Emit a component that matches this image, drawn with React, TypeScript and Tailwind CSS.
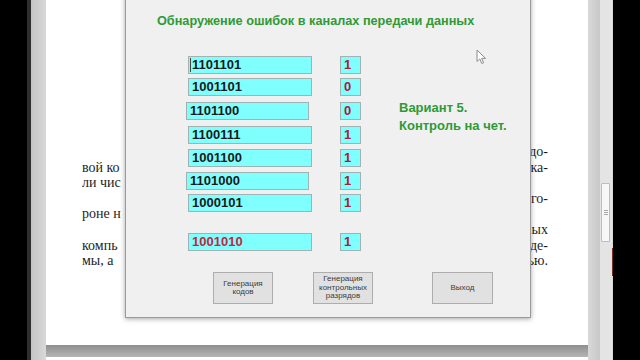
import React from "react";

const rows: { code: string; bit: string; shift?: boolean; red?: boolean; mt: string; caret?: boolean }[] = [
  { code: "1101101", bit: "1", mt: "mt-0", caret: true },
  { code: "1001101", bit: "0", mt: "mt-[4px]" },
  { code: "1101100", bit: "0", mt: "mt-[6px]", shift: true },
  { code: "1100111", bit: "1", mt: "mt-[6px]" },
  { code: "1001100", bit: "1", mt: "mt-[5px]" },
  { code: "1101000", bit: "1", mt: "mt-[5px]", shift: true },
  { code: "1000101", bit: "1", mt: "mt-[4px]" },
  { code: "1001010", bit: "1", mt: "mt-[21px]", red: true },
];

const docLines: { left: string; right: string }[] = [
  { left: "", right: "до-" },
  { left: "вой ко", right: "ка-" },
  { left: "ли чис", right: "" },
  { left: "", right: "го-" },
  { left: "роне н", right: "" },
  { left: "", right: "ых" },
  { left: "компь", right: "де-" },
  { left: "мы, а", right: "ью." },
];

function Cursor() {
  return (
    <svg className="absolute left-[476px] top-[49px]" width="12" height="16" viewBox="0 0 12 16">
      <path
        d="M1 1 L1 12.5 L3.8 10 L5.8 14.5 L7.6 13.7 L5.7 9.4 L9.5 9.4 Z"
        fill="#ffffff"
        stroke="#8c8c8c"
        strokeWidth="1"
        strokeLinejoin="round"
      />
    </svg>
  );
}

export default function App() {
  return (
    <div className="relative flex h-[360px] w-[640px] overflow-hidden bg-black" style={{ fontFamily: '"Liberation Sans", Arial, sans-serif' }}>
      <div className="w-[27px] shrink-0 bg-black" />
      <div className="w-[4px] shrink-0 bg-[#2e2e2e]" />
      <div className="w-[15px] shrink-0 bg-gradient-to-r from-[#c4c4c4] to-[#d9d9d9]" />
      <div className="flex w-[542px] shrink-0 flex-col">
        <div className="h-[345px] bg-white pl-[36px] pr-[40px] pt-[144px] text-[14px] leading-[15.6px] text-[#1e1e1e]" style={{ fontFamily: '"Liberation Serif", "Times New Roman", serif' }}>
          {docLines.map((l, i) => (
            <div key={i} className="flex h-[15.6px] justify-between whitespace-nowrap">
              <span className="w-[44px] overflow-hidden">{l.left}</span>
              <span>{l.right}</span>
            </div>
          ))}
        </div>
        <div className="h-[12px] bg-gradient-to-b from-[#8f8f8f] to-[#b5b5b5]" />
        <div className="flex-1 bg-white" />
      </div>
      <div className="w-[12px] shrink-0 bg-gradient-to-r from-[#d8d8d8] to-[#c8c8c8]" />
      <div className="relative w-[12px] shrink-0 bg-[#e4e4e4]">
        <div className="absolute left-[1px] top-[183px] flex h-[59px] w-[9px] flex-col items-center justify-center gap-[1px] rounded-[1px] border border-[#bdbdbd] bg-[#f7f7f7]">
          <div className="h-[1px] w-[4px] bg-[#a8a8a8]" />
          <div className="h-[1px] w-[4px] bg-[#a8a8a8]" />
          <div className="h-[1px] w-[4px] bg-[#a8a8a8]" />
        </div>
      </div>
      <div className="relative w-[1px] shrink-0 bg-[#d9d9d9]">
        <div className="absolute left-0 top-[248px] h-[28px] w-[1px] bg-[#7a2a20]" />
      </div>
      <div className="flex-1 bg-black" />

      {/* Dialog window */}
      <div className="absolute left-[125px] top-[-4px] flex h-[322px] w-[406px] flex-col border border-[#9a9a9a] bg-[#f0f0f0] shadow-[0_1px_5px_rgba(0,0,0,0.35)]">
        <div className="mt-[16px] pl-[31px] text-[12.7px] font-bold leading-[16px] text-[#2f9a36]">
          Обнаружение ошибок в каналах передачи данных
        </div>
        <div className="mt-[27px] flex pl-[60px]">
          <div className="flex flex-col">
            {rows.map((r, i) => (
              <div key={i} className={`flex h-[18px] w-[175px] justify-between ${r.mt}`}>
                <div
                  className={`flex h-[18px] items-center border border-[#9fb3b3] bg-[#80ffff] text-[13px] font-bold ${r.caret ? "pl-[1px]" : "pl-[3px]"} ${r.shift ? "ml-0 w-[123px]" : "ml-[2px] w-[124px]"} ${r.red ? "text-[#c0283f]" : "text-[#1a1a1a]"}`}
                >
                  {r.caret && <span className="mr-[1px] h-[14px] w-[1px] bg-[#444]" />}
                  {r.code}
                </div>
                <div className="flex h-[18px] w-[21px] items-center border border-[#9fb3b3] bg-[#80ffff] pl-[3px] text-[13px] font-bold text-[#a8203a]">
                  {r.bit}
                </div>
              </div>
            ))}
          </div>
          <div className="ml-[38px] mt-[43px] text-[13px] font-bold leading-[18px] text-[#2f9a36]">
            <div>Вариант 5.</div>
            <div>Контроль на чет.</div>
          </div>
        </div>
        <div className="mt-[21px] flex pl-[87px] text-[8px] leading-[8.5px] text-[#3c3c3c]">
          <div className="flex h-[32px] w-[60px] items-center justify-center border border-[#adadad] bg-[#e1e1e1] text-center">
            Генерация<br />кодов
          </div>
          <div className="ml-[40px] flex h-[32px] w-[60px] items-center justify-center border border-[#adadad] bg-[#e1e1e1] text-center">
            Генерация<br />контрольных<br />разрядов
          </div>
          <div className="ml-[59px] flex h-[32px] w-[61px] items-center justify-center border border-[#adadad] bg-[#e1e1e1] text-center">
            Выход
          </div>
        </div>
      </div>
      <Cursor />
    </div>
  );
}
